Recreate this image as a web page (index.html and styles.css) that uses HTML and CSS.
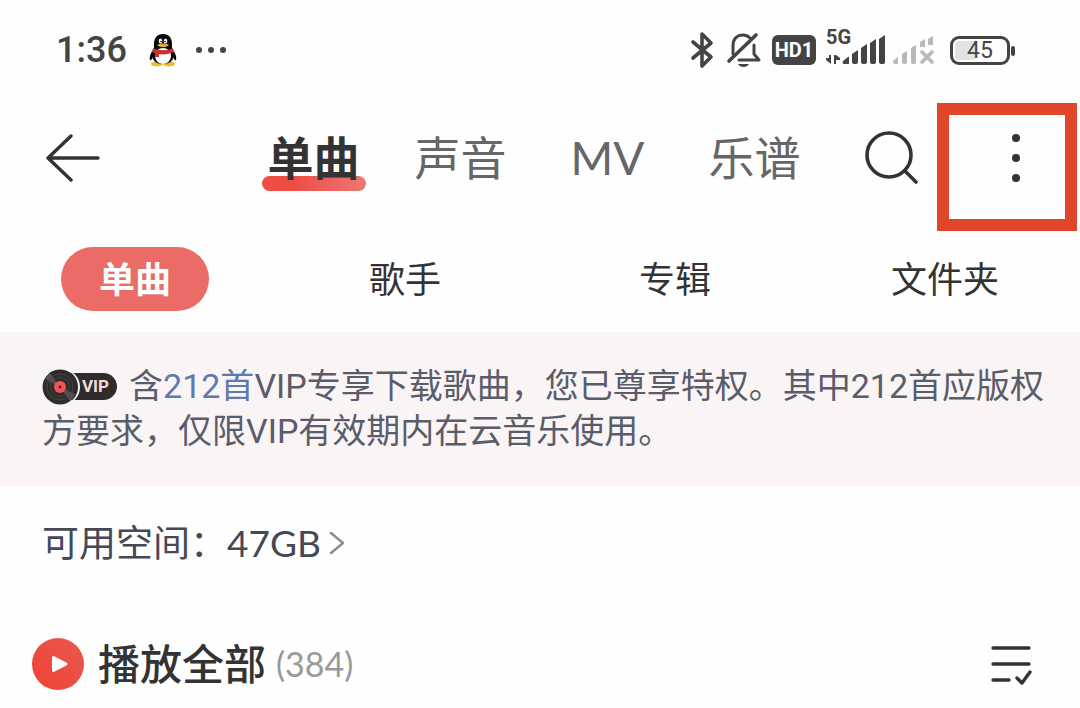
FILE: index.html
```html
<!DOCTYPE html>
<html lang="zh-CN">
<head>
    <meta charset="UTF-8">
    <meta name="viewport" content="width=device-width, initial-scale=1.0">
    <title>本地音乐</title>
    <link rel="stylesheet" href="styles.css">
</head>
<body>
    <div class="status-bar">
        <div class="status-left">
            <span class="time">1:36</span>
            <svg class="qq" width="28" height="34" viewBox="0 0 28 34">
                <ellipse cx="8" cy="31" rx="6" ry="2.5" fill="#e5bd35"/>
                <ellipse cx="20" cy="31" rx="6" ry="2.5" fill="#e5bd35"/>
                <path d="M5 16C2 19 0 24 1 27c1 1 2-1 3-3M23 16c3 3 5 8 4 11-1 1-2-1-3-3" fill="#080808"/>
                <path d="M14 1C8 1 5 5 5 11v5c-3 5-3 15 9 15s12-10 9-15v-5c0-6-3-10-9-10z" fill="#080808"/>
                <ellipse cx="14" cy="23" rx="8" ry="8" fill="#fff"/>
                <ellipse cx="11.5" cy="8" rx="1.8" ry="2.6" fill="#fff"/>
                <ellipse cx="16.5" cy="8" rx="1.8" ry="2.6" fill="#fff"/>
                <circle cx="12" cy="8.5" r="0.8" fill="#000"/>
                <circle cx="16" cy="8.5" r="0.8" fill="#000"/>
                <path d="M8 12c3-2 9-2 12 0-3 3-9 3-12 0z" fill="#dfa92e"/>
                <path d="M4 15c6 3 14 3 20 0l1 4c-5 2-10 3-15 2v3H6v-4l-3-1z" fill="#cf2f2c"/>
            </svg>
            <svg width="32" height="8" viewBox="0 0 32 8" fill="#444">
                <circle cx="4" cy="4" r="3"/>
                <circle cx="16" cy="4" r="3"/>
                <circle cx="28" cy="4" r="3"/>
            </svg>
        </div>
        <div class="status-right">
            <!-- bluetooth -->
            <svg width="24" height="38" viewBox="0 0 24 38" fill="none" stroke="#444" stroke-width="3.6" stroke-linejoin="round" stroke-linecap="round">
                <path d="M3 11l18 15-9 9V3l9 9L3 27"/>
            </svg>
            <!-- muted bell -->
            <svg class="bell" width="36" height="38" viewBox="0 0 36 38" fill="none" stroke="#444" stroke-width="3" stroke-linecap="round" stroke-linejoin="round">
                <path d="M7 23v-8C7 8 11 4 17 4c3 0 5 1 7 3M28 14v9l5 6H13"/>
                <path d="M3 30L30 4" stroke-width="3.6"/>
                <path d="M12 33h11c-2 4-9 4-11 0z" fill="#444" stroke="none"/>
            </svg>
            <span class="hd">HD1</span>
            <span class="network">
                <span class="network-type">5G</span>
                <svg width="60" height="34" viewBox="0 0 60 34" fill="#444">
                    <path d="M3 25h2v9L0 30v-2h3zM8 34h2v-4h4v-2l-4-3H8z"/>
                    <path d="M17 31l5-4q1-1 1 1v6h-5q-2 0-1-3z"/>
                    <path d="M26 24l6-4v12q0 2-2 2h-2q-2 0-2-2z"/>
                    <path d="M35 18l6-4v18q0 2-2 2h-2q-2 0-2-2z"/>
                    <path d="M44 13l6-4v23q0 2-2 2h-2q-2 0-2-2z"/>
                    <path d="M53 9l6-4v27q0 2-2 2h-2q-2 0-2-2z"/>
                </svg>
            </span>
            <svg class="no-signal" width="42" height="30" viewBox="0 0 42 30" fill="#b8b8b8">
                <path d="M1 26l5-4v7H3q-2 0-2-3zM10 19l5-3v11q0 2-2 2h-1q-2 0-2-2zM19 13l5-3v17q0 2-2 2h-1q-2 0-2-2zM28 7l5-3v8h-5zM36 4l5-3v9h-5z"/>
                <path d="M30 17l10 10M40 17L30 27" stroke="#b8b8b8" stroke-width="3.6" stroke-linecap="round"/>
            </svg>
            <span class="battery">45</span>
        </div>
    </div>

    <header class="nav">
        <button class="icon-btn" aria-label="返回">
            <svg width="54" height="48" viewBox="0 0 54 48" fill="none" stroke="#333" stroke-width="3.4" stroke-linecap="round" stroke-linejoin="round">
                <path d="M52 24H3M25 2L2 24l23 22"/>
            </svg>
        </button>
        <nav class="tabs">
            <a class="tab active" href="#">单曲</a>
            <a class="tab" href="#">声音</a>
            <a class="tab" href="#">MV</a>
            <a class="tab" href="#">乐谱</a>
        </nav>
        <div class="nav-actions">
            <button class="icon-btn" aria-label="搜索">
                <svg width="56" height="56" viewBox="0 0 56 56" fill="none" stroke="#333" stroke-width="3.6" stroke-linecap="round">
                    <circle cx="25" cy="25" r="22"/>
                    <path d="M41 41l11 11"/>
                </svg>
            </button>
            <button class="icon-btn more" aria-label="更多">
                <svg width="8" height="48" viewBox="0 0 8 48" fill="#333">
                    <circle cx="4" cy="4" r="4"/>
                    <circle cx="4" cy="24" r="4"/>
                    <circle cx="4" cy="44" r="4"/>
                </svg>
            </button>
        </div>
    </header>

    <div class="filters">
        <button class="filter active">单曲</button>
        <button class="filter">歌手</button>
        <button class="filter">专辑</button>
        <button class="filter">文件夹</button>
    </div>

    <p class="notice">
        <span class="vip"><svg width="36" height="36" viewBox="0 0 36 36">
            <circle cx="18" cy="18" r="17.500" fill="#302c2c"/>
            <path d="M18 18L8 4q-3 2-5 6zM18 18l10 14q4-3 5-7z" fill="#575050"/>
            <circle cx="18" cy="18" r="13" fill="none" stroke="#494343"/>
            <circle cx="18" cy="18" r="9.500" fill="none" stroke="#494343"/>
            <circle cx="18" cy="18" r="6" fill="#ed5558"/>
            <circle cx="18" cy="18" r="1.500" fill="#562427"/>
        </svg><b>VIP</b></span>含<a class="count" href="#">212首</a>VIP专享下载歌曲，您已尊享特权。其中212首应版权方要求，仅限VIP有效期内在云音乐使用。
    </p>

    <a class="storage" href="#">
        可用空间：47GB
        <svg width="16" height="24" viewBox="0 0 16 24" fill="none" stroke="#888b94" stroke-width="2.4" stroke-linecap="round" stroke-linejoin="round">
            <path d="M2 2l12 10L2 22"/>
        </svg>
    </a>

    <div class="play-row">
        <button class="play-all">
            <svg width="52" height="52" viewBox="0 0 52 52">
                <defs>
                    <linearGradient id="playBg" x1="1" y1="0" x2="0" y2="1">
                        <stop offset="0" stop-color="#e85a50"/>
                        <stop offset="1" stop-color="#f04032"/>
                    </linearGradient>
                </defs>
                <circle cx="26" cy="26" r="26" fill="url(#playBg)"/>
                <path d="M21.500 19.500v13L34 26z" fill="#fff" stroke="#fff" stroke-width="3" stroke-linejoin="round"/>
            </svg>
            <span>播放全部</span>
            <span class="total">(384)</span>
        </button>
        <button class="icon-btn" aria-label="多选">
            <svg width="42" height="42" viewBox="0 0 42 42" fill="none" stroke="#333" stroke-width="3.4" stroke-linecap="round" stroke-linejoin="round">
                <path d="M3 5h36M3 21h36M3 37h16M27 35l5 5 8-11"/>
            </svg>
        </button>
    </div>
</body>
</html>
```

FILE: styles.css
```css
*,
*::before,
*::after {
    box-sizing: border-box;
}
body {
    margin: 0;
    background: #fefefe;
    color: #333;
    font-family: Lato, 'Noto Sans CJK SC', sans-serif;
}
a {
    color: inherit;
    text-decoration: none;
}
button {
    border: none;
    padding: 0;
    background: none;
    color: inherit;
    font-family: inherit;
    cursor: pointer;
}
svg {
    display: block;
    flex-shrink: 0;
}
.icon-btn {
    display: flex;
}

/* status bar */
.status-bar {
    display: flex;
    justify-content: space-between;
    align-items: center;
    height: 100px;
    padding: 0 70px 0 56px;
    color: #444;
    font-family: Roboto, sans-serif;
}
.status-left,
.status-right {
    display: flex;
    align-items: center;
}
.time {
    font-size: 36px;
    font-weight: 500;
    line-height: 40px;
}
.qq {
    margin: 0 18px 0 22px;
}
.bell {
    margin: 0 10px 0 12px;
}
.hd {
    width: 44px;
    border-radius: 6px;
    background: #444;
    color: #fff;
    font-size: 20px;
    font-weight: 700;
    line-height: 30px;
    text-align: center;
}
.network {
    position: relative;
    margin: 0 6px 0 10px;
}
.network-type {
    position: absolute;
    top: -3px;
    left: 0;
    font-size: 20px;
    font-weight: 700;
    line-height: 20px;
}
.network svg {
    margin-bottom: 6px;
}
.battery {
    position: relative;
    width: 60px;
    margin-left: 16px;
    border: 3px solid #444;
    border-radius: 9px;
    background: linear-gradient(90deg, #e2e2e2 40%, transparent 40%) content-box;
    padding: 2px;
    font-size: 23px;
    line-height: 19px;
    text-align: center;
}
.battery::after {
    content: '';
    position: absolute;
    top: 7px;
    right: -8px;
    width: 4px;
    height: 10px;
    border-radius: 2px;
    background: #444;
}

/* top navigation */
.nav {
    display: flex;
    align-items: center;
    justify-content: space-between;
    height: 116px;
    padding: 0 60px 0 46px;
}
.tabs {
    display: grid;
    grid-template-columns: repeat(4, 1fr);
    flex: 1;
    margin: 0 36px 0 140px;
}
.tab {
    position: relative;
    justify-self: center;
    color: #666;
    font-size: 46px;
    line-height: 64px;
}
.tab.active {
    z-index: 0;
    color: #333;
    font-weight: 700;
}
.tab.active::before {
    content: '';
    position: absolute;
    z-index: -1;
    bottom: -1px;
    left: -6px;
    right: -6px;
    height: 15px;
    border-radius: 8px;
    background: linear-gradient(90deg, #ee4d46 30%, #ec7773);
}
.nav-actions {
    display: flex;
    align-items: center;
    gap: 92px;
}
.more {
    position: relative;
}
.more::after {
    content: '';
    position: absolute;
    top: -31px;
    left: -75px;
    width: 140px;
    height: 128px;
    border: 12px solid #e0472a;
}

/* filter pills */
.filters {
    display: grid;
    grid-template-columns: repeat(4, 1fr);
    justify-items: center;
    padding: 31px 0 21px;
}
.filter {
    min-width: 148px;
    border-radius: 32px;
    font-size: 36px;
    line-height: 64px;
}
.filter.active {
    background: #eb6c67;
    color: #fff;
    font-weight: 700;
}

/* vip notice */
.notice {
    margin: 0;
    padding: 32px 30px 32px 42px;
    background: #faf4f4;
    color: #595d6b;
    font-family: Roboto, 'Noto Sans CJK SC', sans-serif;
    font-size: 34px;
    line-height: 45px;
}
.count {
    color: #5d7bb0;
}
.vip {
    display: inline-flex;
    align-items: center;
    height: 45px;
    margin-right: 12px;
    vertical-align: top;
}
.vip b {
    margin-left: -16px;
    padding: 0 8px 0 20px;
    border-radius: 0 14px 14px 0;
    background: #302c2c;
    color: #f2dcda;
    font-size: 17px;
    line-height: 27px;
}
.vip svg {
    position: relative;
    border-radius: 50%;
    box-shadow: 2px 0 0 #faf4f4;
}

/* storage */
.storage {
    display: flex;
    align-items: center;
    gap: 8px;
    padding: 32px 42px;
    color: #454957;
    font-size: 37px;
    line-height: 50px;
}

/* play all */
.play-row {
    display: flex;
    justify-content: space-between;
    align-items: center;
    padding: 34px 48px 14px 32px;
}
.play-all {
    display: flex;
    align-items: center;
    font-size: 42px;
    font-weight: 500;
    line-height: 60px;
}
.play-all span {
    margin-left: 14px;
}
.play-all .total {
    margin-left: 10px;
    color: #999;
    font-size: 34px;
    font-weight: 400;
}
```
